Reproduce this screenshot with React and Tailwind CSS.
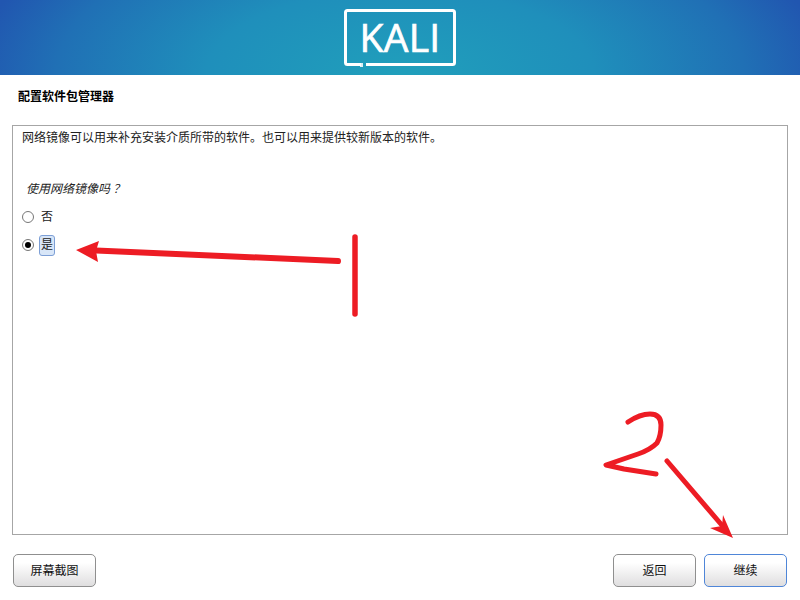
const FONT = "font-['Liberation_Sans','Noto_Sans_CJK_SC',sans-serif]";

function Logo() {
  return (
    <svg width="112" height="58" viewBox="0 0 112 58" fill="none">
      <path d="M17 55.5H3.5Q1.5 55.5 1.5 53.5V3.5Q1.5 1.5 3.5 1.5H108.5Q110.5 1.5 110.5 3.5V53.5Q110.5 55.5 108.5 55.5H22" stroke="#fff" strokeWidth="3" />
      <rect x="16" y="54" width="3" height="4" fill="#fff" opacity="0.85" />
      <text x="56" y="43" textAnchor="middle" fill="#fff" stroke="#fff" strokeWidth="0.7" fontFamily="'Open Sans', sans-serif" fontSize="39" letterSpacing="0.3">KALI</text>
    </svg>
  );
}

function Btn({ children, focus }) {
  return (
    <button
      className={`w-[83px] h-[33px] rounded-[5px] border bg-gradient-to-b from-white from-25% to-[#dfdedf] text-[12px] text-[#111] ${
        focus ? "border-[#4f86d8] border-[1.5px]" : "border-[#8f8f8f]"
      }`}
    >
      {children}
    </button>
  );
}

function Overlay() {
  return (
    <svg className="absolute inset-0 pointer-events-none" width="800" height="600" viewBox="0 0 800 600" fill="none">
      <g stroke="#ed1c24" strokeLinecap="round" strokeLinejoin="round">
        <path d="M355 237V314" strokeWidth="5.5" />
        <path d="M338 261L96 250.5" strokeWidth="6" />
        <path d="M628 422Q640 414 650 414Q661 414 661 425Q661 436 657 443Q650 450 638 454L606 465L624 469L656 474" strokeWidth="5" />
        <path d="M667 461L726 530" strokeWidth="5" />
      </g>
      <path d="M76 250L99 241L96 251L98 262Z" fill="#ed1c24" />
      <path d="M733 538L723 515L722 526L710 528Z" fill="#ed1c24" />
    </svg>
  );
}

export default function App() {
  return (
    <div className={`relative w-[800px] h-[600px] bg-white flex flex-col overflow-hidden ${FONT}`}>
      <header className="h-[75px] shrink-0 flex items-center justify-center bg-[radial-gradient(ellipse_430px_190px_at_50%_100%,#209fbb_0%,#1f8fbb_45%,#2070b5_80%,#2156b0_100%)]">
        <Logo />
      </header>
      <h1 className="h-[50px] shrink-0 pl-[18px] pt-[14px] text-[12px] leading-[16px] font-bold text-black">配置软件包管理器</h1>
      <main className="mx-3 h-[410px] shrink-0 border border-[#a6a6a6] pl-[9px] pt-[4px] text-[12px] leading-[16px] text-[#222]">
        <p>网络镜像可以用来补充安装介质所带的软件。也可以用来提供较新版本的软件。</p>
        <p className="mt-[35px] ml-[4px] italic">使用网络镜像吗<span className="ml-[3px]">？</span></p>
        <div className="mt-[12px] flex items-center h-[16px]">
          <span className="w-[12px] h-[12px] rounded-full border border-[#777] bg-white" />
          <span className="ml-[6px] px-[1px]">否</span>
        </div>
        <div className="mt-[10px] flex items-center h-[20px]">
          <span className="w-[12px] h-[12px] rounded-full border border-[#777] bg-white flex items-center justify-center">
            <span className="w-[6px] h-[6px] rounded-full bg-black" />
          </span>
          <span className="ml-[5px] px-[1px] h-[21px] leading-[19px] rounded-[3px] border border-[#7d9fd6] bg-[#d8e6f8]">是</span>
        </div>
      </main>
      <footer className="flex justify-between pl-[13px] pr-[13px] pt-[19px]">
        <Btn>屏幕截图</Btn>
        <div className="flex gap-2">
          <Btn>返回</Btn>
          <Btn focus>继续</Btn>
        </div>
      </footer>
      <Overlay />
    </div>
  );
}
